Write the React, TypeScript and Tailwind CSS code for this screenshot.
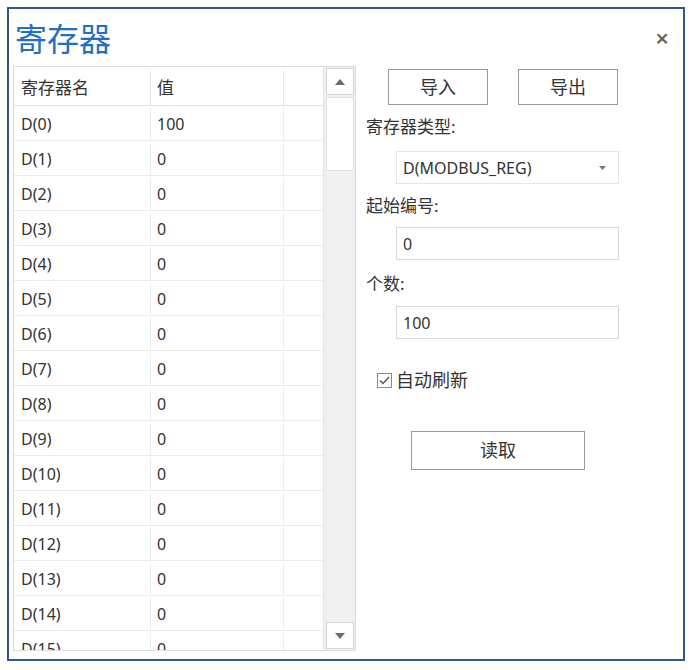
import React from 'react'

const rows = [
  ['D(0)', '100'],
  ...Array.from({ length: 15 }, (_, i) => [`D(${i + 1})`, '0']),
]

function Arrow({ up }: { up?: boolean }) {
  return (
    <svg width="10" height="6" viewBox="0 0 10 6">
      <polygon points={up ? '0,6 10,6 5,0' : '0,0 10,0 5,6'} fill="#6b6b6b" />
    </svg>
  )
}

export default function App() {
  const font = { fontFamily: '"Noto Sans", "Noto Sans CJK SC", sans-serif' }

  return (
    <div className="w-[692px] h-[670px] bg-white pt-[7px] pl-[7px]" style={font}>
      <div className="w-[678px] h-[654px] border-2 border-[#2f5597] bg-white flex flex-col">
        <div className="flex items-start justify-between h-[57px]">
          <div className="pl-[6px] pt-[11px] text-[32px] leading-[38px] text-[#1f6fc6]">寄存器</div>
          <div className="pr-[14px] pt-[17px] text-[24px] leading-none text-[#666] font-semibold">×</div>
        </div>

        <div className="flex">
          {/* table */}
          <div className="ml-[4px] w-[343px] h-[585px] border border-[#dcdcdc] flex overflow-hidden">
            <div className="w-[309px] flex flex-col text-[16px] text-[#333]">
              <div className="flex h-[39px] shrink-0 border-b border-[#e3e3e3] items-center pt-[4px]">
                <div className="w-[137px] pl-[7px] border-r border-[#e3e3e3] h-full flex items-center text-[17px]">寄存器名</div>
                <div className="w-[133px] pl-[6px] border-r border-[#e3e3e3] h-full flex items-center text-[17px]">值</div>
                <div className="flex-1"></div>
              </div>
              {rows.map(([n, v]) => (
                <div key={n} className="flex h-[35px] shrink-0 border-b border-[#ececec] pt-[2px]">
                  <div className="w-[137px] pl-[7px] border-r border-[#ececec] h-full flex items-center">{n}</div>
                  <div className="w-[133px] pl-[6px] border-r border-[#ececec] h-full flex items-center">{v}</div>
                  <div className="flex-1"></div>
                </div>
              ))}
            </div>
            <div className="w-[32px] bg-[#f0f0f0] border-l border-[#e3e3e3] flex flex-col items-center pt-[1px] pb-[1px]">
              <div className="w-[28px] h-[27px] bg-white border border-[#d5d5d5] flex items-center justify-center">
                <Arrow up />
              </div>
              <div className="w-[28px] h-[74px] bg-white border border-[#e0e0e0] mt-[2px]"></div>
              <div className="flex-1"></div>
              <div className="w-[28px] h-[27px] bg-white border border-[#d5d5d5] flex items-center justify-center">
                <Arrow />
              </div>
            </div>
          </div>

          {/* right panel */}
          <div className="ml-[10px] flex flex-col text-[17px] text-[#333]">
            <div className="flex gap-[30px] pl-[22px] mt-[3px]">
              <div className="w-[100px] h-[36px] border border-[#9a9a9a] flex items-center justify-center text-[18px]">导入</div>
              <div className="w-[100px] h-[36px] border border-[#9a9a9a] flex items-center justify-center text-[18px]">导出</div>
            </div>
            <div className="mt-[11px] leading-[22px]">寄存器类型:</div>
            <div className="ml-[30px] mt-[13px] w-[223px] h-[33px] border border-[#e6e6e6] flex items-center justify-between pl-[6px] pr-[12px] text-[16px]">
              <span>D(MODBUS_REG)</span>
              <svg width="7" height="4" viewBox="0 0 7 4"><polygon points="0,0 7,0 3.5,4" fill="#777" /></svg>
            </div>
            <div className="mt-[11px] leading-[22px]">起始编号:</div>
            <div className="ml-[30px] mt-[10px] w-[223px] h-[33px] border border-[#d6d6d6] flex items-center pl-[6px] text-[16px]">0</div>
            <div className="mt-[13px] leading-[22px]">个数:</div>
            <div className="ml-[30px] mt-[11px] w-[223px] h-[33px] border border-[#d6d6d6] flex items-center pl-[6px] text-[16px]">100</div>
            <div className="ml-[11px] mt-[28px] flex items-center gap-[4px] text-[18px]">
              <span className="w-[15px] h-[15px] border border-[#8a8a8a] flex items-center justify-center">
                <svg width="11" height="9" viewBox="0 0 11 9"><polyline points="1,4.5 4,7.5 10,1" fill="none" stroke="#555" strokeWidth="1.4" /></svg>
              </span>
              <span>自动刷新</span>
            </div>
            <div className="ml-[45px] mt-[37px] w-[174px] h-[39px] border border-[#9a9a9a] flex items-center justify-center text-[18px]">读取</div>
          </div>
        </div>
      </div>
    </div>
  )
}
